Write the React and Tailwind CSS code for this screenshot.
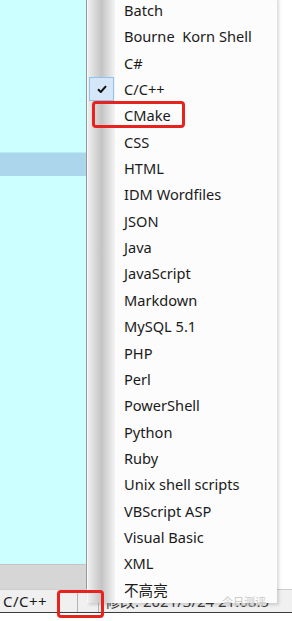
const items = [
  "Batch",
  "Bourne  Korn Shell",
  "C#",
  "C/C++",
  "CMake",
  "CSS",
  "HTML",
  "IDM Wordfiles",
  "JSON",
  "Java",
  "JavaScript",
  "Markdown",
  "MySQL 5.1",
  "PHP",
  "Perl",
  "PowerShell",
  "Python",
  "Ruby",
  "Unix shell scripts",
  "VBScript ASP",
  "Visual Basic",
  "XML",
  "不高亮",
];

const App = () => {
  return (
    <div
      className="relative w-[292px] h-[621px] overflow-hidden bg-white text-[#1a1a1a]"
      style={{ fontFamily: '"Noto Sans", "Noto Sans CJK SC", sans-serif' }}
    >
      {/* page behind the menu */}
      <div className="flex flex-col h-full">
        <div className="flex flex-1 min-h-0">
          <div className="w-[87px] flex flex-col border-r border-[#9a9a9a]">
            <div className="flex-1 bg-[#ccffff] pt-[152px]">
              <div className="h-px bg-[#b6ecf2]" />
              <div className="h-[23px] bg-[#acd6ec]" />
            </div>
            <div className="h-[25px] bg-[#d6d6d6] border-t border-[#c4c4c4]" />
          </div>
          <div className="flex-1" />
        </div>
        <div className="h-[24px] bg-[#f0f0f0] border-t border-[#cfcfcf] border-b border-b-[#3c3c3c] flex items-center text-[15px] leading-none">
          <span className="ml-[3px] w-[74px] tracking-[0.5px]">C/C++</span>
          <div className="h-full w-[22px] border-l border-r border-[#b4b4b4] flex items-center justify-center text-[10px] text-[#444]">
            ˋ
          </div>
          <span className="ml-[6px] text-[#3a3a3a] whitespace-nowrap">修改:  2021/3/24 21:08:5</span>
        </div>
        <div className="h-[8px] bg-white" />
      </div>

      {/* context menu */}
      <div className="absolute left-[87px] top-[-3px] w-[190px] bg-[#fcfcfc] shadow-[2px_2px_3px_rgba(0,0,0,0.15)] flex">
        <div className="w-[28px] bg-gradient-to-r from-[#eeeeee] via-[#c4c4c4] to-[#f4f4f4] border-l border-[#f8f8f8]" />
        <div className="flex-1 flex flex-col">
          {items.map((label) => (
            <div
              key={label}
              className="h-[26.36px] flex items-center pl-[9px] text-[14.6px] leading-none whitespace-pre"
            >
              {label}
            </div>
          ))}
        </div>

        {/* checked mark for C/C++ */}
        <div className="absolute left-[2px] top-[80px] w-[25px] h-[24px] bg-[#d4e6f7] border border-[#90c4ef] flex items-center justify-center">
          <svg width="10" height="8" viewBox="0 0 10 8">
            <path d="M1 4.2 L3.8 7 L9 1.2" fill="none" stroke="#111" strokeWidth="2" />
          </svg>
        </div>
      </div>

      {/* watermark */}
      <div className="absolute left-[222px] top-[594px] text-[11px] text-[#c8c8c8] whitespace-nowrap">
        今日测评
      </div>

      {/* red highlight boxes */}
      <div className="absolute left-[92px] top-[101px] w-[93px] h-[27px] border-[3px] border-[#e8231d] rounded-[4px]" />
      <div className="absolute left-[57px] top-[590px] w-[47px] h-[28px] border-[3px] border-[#e8231d] rounded-[4px]" />
    </div>
  );
};

export default App;
